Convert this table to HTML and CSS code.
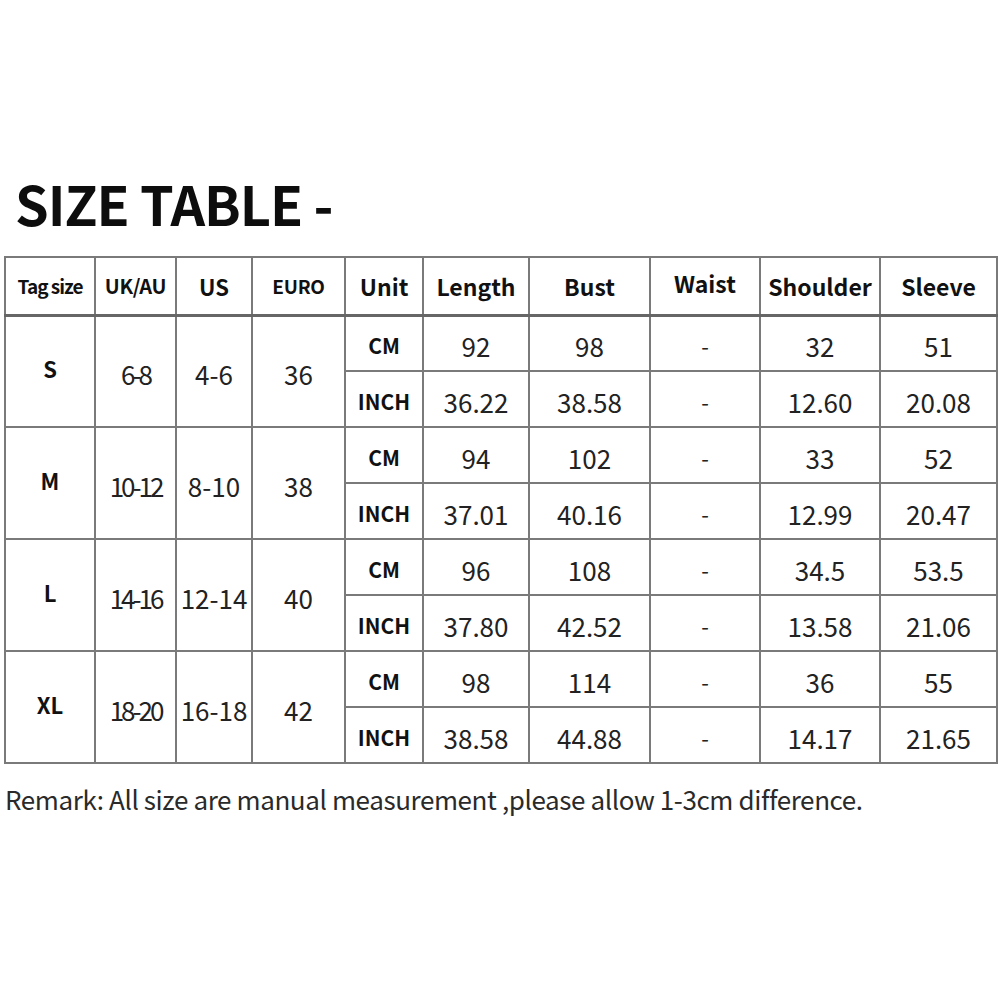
FILE: index.html
```html
<!DOCTYPE html>
<html lang="en">
<head>
<meta charset="utf-8">
<title>Size Table</title>
<link rel="stylesheet" href="styles.css">
</head>
<body>
<div class="page">
  <h1 class="title">SIZE TABLE -</h1>
  <table class="sizes">
    <colgroup>
      <col class="c1"><col class="c2"><col class="c3"><col class="c4"><col class="c5">
      <col class="c6"><col class="c7"><col class="c8"><col class="c9"><col class="c10">
    </colgroup>
    <thead>
      <tr>
        <th class="h-tag">Tag size</th>
        <th class="h-uk">UK/AU</th>
        <th class="h-us">US</th>
        <th class="h-euro">EURO</th>
        <th class="h-big">Unit</th>
        <th class="h-big">Length</th>
        <th class="h-big">Bust</th>
        <th class="h-big h-up">Waist</th>
        <th class="h-big">Shoulder</th>
        <th class="h-big">Sleeve</th>
      </tr>
    </thead>
    <tbody>
      <tr>
        <td rowspan="2" class="tag">S</td>
        <td rowspan="2" class="uk">6-8</td>
        <td rowspan="2">4-6</td>
        <td rowspan="2">36</td>
        <td class="unit">CM</td><td>92</td><td>98</td><td class="dash">-</td><td>32</td><td>51</td>
      </tr>
      <tr>
        <td class="unit">INCH</td><td>36.22</td><td>38.58</td><td class="dash">-</td><td>12.60</td><td>20.08</td>
      </tr>
      <tr>
        <td rowspan="2" class="tag">M</td>
        <td rowspan="2" class="uk">10-12</td>
        <td rowspan="2">8-10</td>
        <td rowspan="2">38</td>
        <td class="unit">CM</td><td>94</td><td>102</td><td class="dash">-</td><td>33</td><td>52</td>
      </tr>
      <tr>
        <td class="unit">INCH</td><td>37.01</td><td>40.16</td><td class="dash">-</td><td>12.99</td><td>20.47</td>
      </tr>
      <tr>
        <td rowspan="2" class="tag">L</td>
        <td rowspan="2" class="uk">14-16</td>
        <td rowspan="2">12-14</td>
        <td rowspan="2">40</td>
        <td class="unit">CM</td><td>96</td><td>108</td><td class="dash">-</td><td>34.5</td><td>53.5</td>
      </tr>
      <tr>
        <td class="unit">INCH</td><td>37.80</td><td>42.52</td><td class="dash">-</td><td>13.58</td><td>21.06</td>
      </tr>
      <tr>
        <td rowspan="2" class="tag">XL</td>
        <td rowspan="2" class="uk">18-20</td>
        <td rowspan="2">16-18</td>
        <td rowspan="2">42</td>
        <td class="unit">CM</td><td>98</td><td>114</td><td class="dash">-</td><td>36</td><td>55</td>
      </tr>
      <tr>
        <td class="unit">INCH</td><td>38.58</td><td>44.88</td><td class="dash">-</td><td>14.17</td><td>21.65</td>
      </tr>
    </tbody>
  </table>
  <p class="remark">Remark: All size are manual measurement ,please allow 1-3cm difference.</p>
</div>
</body>
</html>
```

FILE: styles.css
```css
html, body {
  margin: 0;
  padding: 0;
  background: #ffffff;
}

.page {
  width: 1000px;
  height: 999px;
  font-family: "Noto Sans CJK SC", "Noto Sans", sans-serif;
  color: #1a1a1a;
  padding-top: 168px;
  box-sizing: border-box;
}

.title {
  margin: 0 0 0 15px;
  font-size: 54px;
  font-weight: 700;
  line-height: 70px;
  color: #0d0d0d;
  letter-spacing: -1px;
}

.sizes {
  margin: 18px 0 0 4px;
  border-collapse: collapse;
  table-layout: fixed;
  width: 992px;
}

.c1 { width: 90px; }
.c2 { width: 81px; }
.c3 { width: 76px; }
.c4 { width: 93px; }
.c5 { width: 78px; }
.c6 { width: 106px; }
.c7 { width: 121px; }
.c8 { width: 110px; }
.c9 { width: 120px; }
.c10 { width: 117px; }

.sizes th,
.sizes td {
  border: 2px solid #7a7a7a;
  padding: 0;
  text-align: center;
  vertical-align: middle;
  white-space: nowrap;
  overflow: visible;
}

.sizes thead tr {
  height: 58px;
}

.sizes tbody tr {
  height: 56px;
}

.sizes thead th {
  border-bottom: 3px solid #666666;
  font-weight: 700;
  color: #111111;
}

.h-tag {
  font-size: 19px;
  letter-spacing: -1px;
}

.h-uk {
  font-size: 20px;
  letter-spacing: -0.3px;
}

.h-us {
  font-size: 22px;
}

.h-euro {
  font-size: 19px;
  letter-spacing: -0.3px;
}

.h-big {
  font-size: 23px;
  font-weight: 600;
}

.h-up {
  padding-bottom: 6px !important;
}

.sizes td {
  font-size: 26px;
  font-weight: 400;
  color: #222222;
  padding-top: 4px;
}

.sizes td.tag {
  font-size: 22px;
  font-weight: 700;
  color: #111111;
  padding-top: 0;
  padding-bottom: 6px;
}

.sizes td.uk {
  font-size: 26px;
  letter-spacing: -3px;
}

.sizes td.unit {
  font-size: 21px;
  font-weight: 700;
  color: #111111;
}

.sizes td.dash {
  font-size: 22px;
}

.remark {
  margin: 18px 0 0 5px;
  font-size: 26px;
  line-height: 34px;
  color: #2a2a2a;
  letter-spacing: -0.4px;
}
```
